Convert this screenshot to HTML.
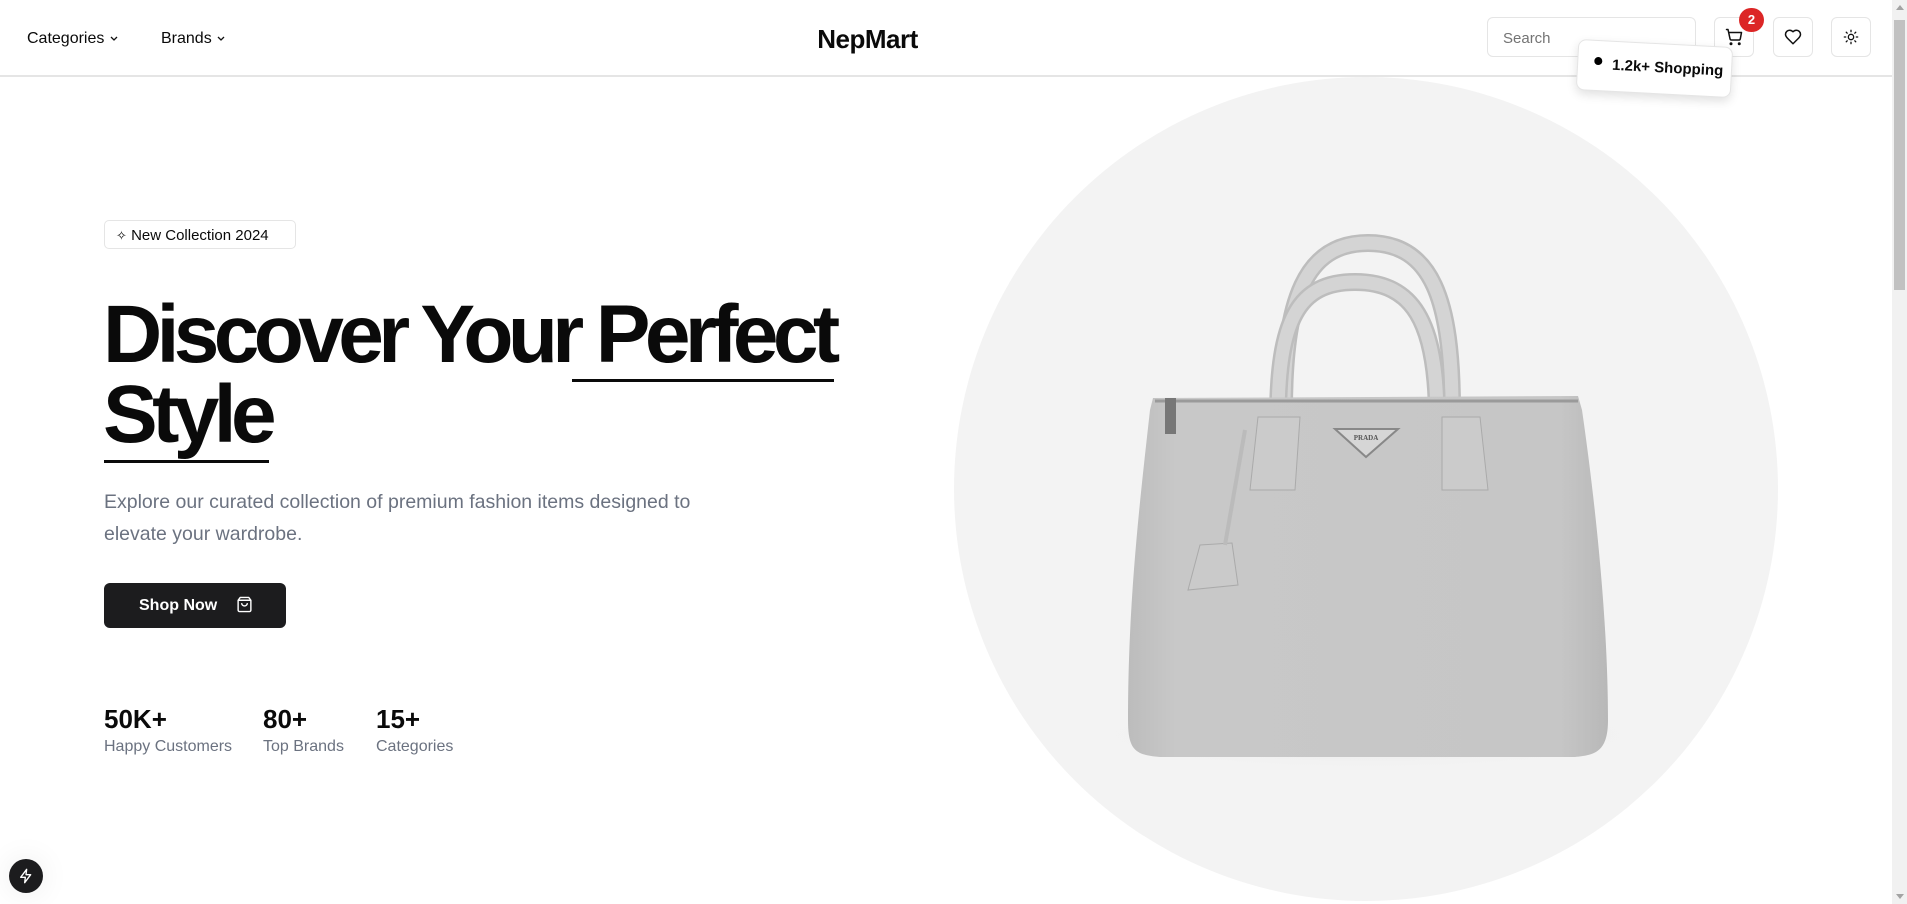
<!DOCTYPE html>
<html><head><meta charset="utf-8"><style>
*{box-sizing:border-box;margin:0;padding:0}
body{width:1907px;height:904px;overflow:hidden;background:#fff;font-family:"Liberation Sans",sans-serif;color:#0a0a0a;position:relative}
.abs{position:absolute}
.hdr{left:0;top:0;width:1892px;height:77px;border-bottom:2px solid #e5e5e5;background:#fff;z-index:3}
.nav{font-size:16px;top:30px}
.btn{width:40px;height:40px;border:1px solid #e5e5e5;border-radius:6px;top:17px;display:flex;align-items:center;justify-content:center;background:#fff}
.sb{left:1892px;top:0;width:15px;height:904px;background:#f1f1f1;z-index:5}
</style></head><body>
<div class="abs hdr">
 <div class="abs nav" style="left:27px">Categories <svg width="10" height="10" viewBox="0 0 10 10"><path d="M2 4l3 3 3-3" fill="none" stroke="#111" stroke-width="1.3"/></svg></div>
 <div class="abs nav" style="left:161px">Brands <svg width="10" height="10" viewBox="0 0 10 10"><path d="M2 4l3 3 3-3" fill="none" stroke="#111" stroke-width="1.3"/></svg></div>
 <div class="abs" style="left:0;width:1735px;text-align:center;top:24px;font-size:26px;font-weight:bold;letter-spacing:-0.5px">NepMart</div>
 <div class="abs" style="left:1487px;top:17px;width:209px;height:40px;border:1px solid #e5e5e5;border-radius:6px;padding:12px 15px;font-size:15px;color:#737373">Search</div>
 <div class="abs btn" style="left:1714px"><svg width="18" height="18" viewBox="0 0 24 24" fill="none" stroke="#111" stroke-width="2" stroke-linecap="round" stroke-linejoin="round"><circle cx="8" cy="21" r="1"/><circle cx="19" cy="21" r="1"/><path d="M2 2h2l2.7 12.4a2 2 0 0 0 2 1.6h9.7a2 2 0 0 0 2-1.6L22 6H5.1"/></svg></div>
 <div class="abs" style="left:1739px;top:8px;width:25px;height:24px;border-radius:12px;background:#dc2626;color:#fff;font-size:13px;font-weight:bold;text-align:center;line-height:24px">2</div>
 <div class="abs btn" style="left:1773px"><svg width="18" height="18" viewBox="0 0 24 24" fill="none" stroke="#111" stroke-width="2" stroke-linejoin="round"><path d="M19 14c1.5-1.5 3-3.2 3-5.5A5.5 5.5 0 0 0 16.5 3c-1.8 0-3 .5-4.5 2-1.5-1.5-2.7-2-4.5-2A5.5 5.5 0 0 0 2 8.5c0 2.300 1.5 4 3 5.5l7 7Z"/></svg></div>
 <div class="abs btn" style="left:1831px"><svg width="16" height="16" viewBox="0 0 24 24" fill="none" stroke="#111" stroke-width="2" stroke-linecap="round"><circle cx="12" cy="12" r="4"/><path d="M12 2v2M12 20v2M4.9 4.9l1.4 1.4M17.7 17.7l1.4 1.4M2 12h2M20 12h2M6.3 17.7l-1.4 1.4M19.1 4.9l-1.4 1.4"/></svg></div>
</div>
<div class="abs" style="left:954px;top:77px;width:824px;height:824px;border-radius:50%;background:#f3f3f3"></div>
<svg class="abs" style="left:0;top:0" width="1907" height="904">
 <defs><radialGradient id="sh" cx="0.5" cy="0.5" r="0.5"><stop offset="0" stop-color="#d8d8d8"/><stop offset="1" stop-color="#f3f3f3" stop-opacity="0"/></radialGradient>
 <linearGradient id="bg" x1="0" x2="1"><stop offset="0" stop-color="#bcbcbc"/><stop offset="0.1" stop-color="#c8c8c8"/><stop offset="0.9" stop-color="#c6c6c6"/><stop offset="1" stop-color="#b8b8b8"/></linearGradient></defs>
 <ellipse cx="1368" cy="735" rx="280" ry="35" fill="url(#sh)"/>
 <path d="M1284 410 C1284 300 1305 243 1368 243 C1432 243 1452 300 1452 410" fill="none" stroke="#bdbdbd" stroke-width="18"/>
 <path d="M1284 410 C1284 300 1305 243 1368 243 C1432 243 1452 300 1452 410" fill="none" stroke="#d4d4d4" stroke-width="13"/>
 <path d="M1278 420 C1278 320 1298 282 1355 282 C1412 282 1437 320 1437 420" fill="none" stroke="#bdbdbd" stroke-width="18"/>
 <path d="M1278 420 C1278 320 1298 282 1355 282 C1412 282 1437 320 1437 420" fill="none" stroke="#d4d4d4" stroke-width="13"/>
 <path d="M1153 398 L1578 396 L1582 410 C1595 500 1608 620 1608 720 C1608 752 1595 755 1575 757 L1160 757 C1135 755 1128 750 1128 720 C1128 600 1140 500 1150 410 Z" fill="url(#bg)"/>
 <path d="M1155 401 L1578 401" stroke="#9a9a9a" stroke-width="3"/>
 <path d="M1258 417 L1300 417 L1295 490 L1250 490 Z" fill="#cbcbcb" stroke="#aaa"/>
 <path d="M1442 417 L1480 417 L1488 490 L1442 490 Z" fill="#cbcbcb" stroke="#aaa"/>
 <path d="M1335 429 L1398 429 L1366 457 Z" fill="#d6d6d6" stroke="#888" stroke-width="2"/>
 <text x="1366" y="440" font-size="7" font-family="Liberation Serif" text-anchor="middle" fill="#555" font-weight="bold">PRADA</text>
 <path d="M1200 545 L1232 543 L1238 585 L1188 590 Z" fill="#cacaca" stroke="#aaa"/>
 <path d="M1245 430 L1225 545" stroke="#bbb" stroke-width="4"/>
 <rect x="1165" y="398" width="11" height="36" fill="#777"/>
</svg>
<div class="abs" style="left:1577px;top:43px;width:155px;height:51px;background:#fff;border:1px solid #e5e5e5;border-radius:8px;box-shadow:0 4px 10px rgba(0,0,0,.12);transform:rotate(3deg);font-size:15px;font-weight:bold;padding:15px 0 0 16px;z-index:4"><span style="display:inline-block;width:8px;height:8px;border-radius:50%;background:#000;margin-right:10px;vertical-align:4px"></span>1.2k+ Shopping</div>
<div class="abs" style="left:104px;top:220px;width:192px;height:29px;border:1px solid #e5e5e5;border-radius:5px;font-size:15px;padding:6px 0 0 11px"><span style="font-size:13px">&#10023;</span> New Collection 2024</div>
<div class="abs" style="left:103px;top:295px;font-size:82px;font-weight:bold;letter-spacing:-5.6px;line-height:80px;white-space:nowrap">Discover Your Perfect<br>Style</div>
<div class="abs" style="left:572px;top:379px;width:262px;height:3px;background:#0a0a0a"></div>
<div class="abs" style="left:104px;top:460px;width:165px;height:3px;background:#0a0a0a"></div>
<div class="abs" style="left:104px;top:486px;width:640px;font-size:19.5px;line-height:32px;color:#6b7280">Explore our curated collection of premium fashion items designed to elevate your wardrobe.</div>
<div class="abs" style="left:104px;top:583px;width:182px;height:45px;background:#1c1c1e;border-radius:6px;color:#fff;font-size:16px;font-weight:bold;padding:13px 0 0 35px">Shop Now <svg style="margin-left:14px;vertical-align:-3px" width="17" height="17" viewBox="0 0 24 24" fill="none" stroke="#fff" stroke-width="2" stroke-linejoin="round"><path d="M6 2 3 6v14a2 2 0 0 0 2 2h14a2 2 0 0 0 2-2V6l-3-4Z"/><path d="M3 6h18M16 10a4 4 0 0 1-8 0"/></svg></div>
<div class="abs" style="left:104px;top:704px;font-size:26px;font-weight:bold">50K+</div>
<div class="abs" style="left:263px;top:704px;font-size:26px;font-weight:bold">80+</div>
<div class="abs" style="left:376px;top:704px;font-size:26px;font-weight:bold">15+</div>
<div class="abs" style="left:104px;top:738px;font-size:16px;color:#6b7280">Happy Customers</div>
<div class="abs" style="left:263px;top:738px;font-size:16px;color:#6b7280">Top Brands</div>
<div class="abs" style="left:376px;top:738px;font-size:16px;color:#6b7280">Categories</div>
<div class="abs" style="left:9px;top:859px;width:34px;height:34px;border-radius:50%;background:#1c1c1e;display:flex;align-items:center;justify-content:center;box-shadow:0 0 30px rgba(0,0,0,.08)"><svg width="16" height="16" viewBox="0 0 24 24" fill="none" stroke="#fff" stroke-width="2" stroke-linejoin="round"><path d="M13 2 4 14h7l-1 8 9-12h-7z"/></svg></div>
<div class="abs sb"><div style="position:absolute;left:2px;top:20px;width:11px;height:270px;background:#c1c1c1"></div><div style="position:absolute;left:4px;top:5px;border:4px solid transparent;border-bottom:5px solid #a3a3a3;border-top:0"></div><div style="position:absolute;left:4px;bottom:5px;border:4px solid transparent;border-top:5px solid #a3a3a3;border-bottom:0"></div></div>
</body></html>
